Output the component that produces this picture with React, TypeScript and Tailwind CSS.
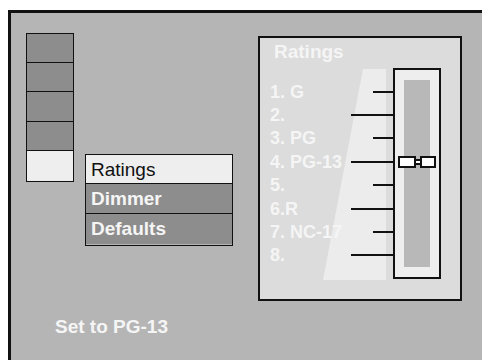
const ratings = [
  { label: '1. G', long: false },
  { label: '2.', long: true },
  { label: '3. PG', long: false },
  { label: '4. PG-13', long: true },
  { label: '5.', long: false },
  { label: '6.R', long: true },
  { label: '7. NC-17', long: false },
  { label: '8.', long: true },
];

const menu = ['Ratings', 'Dimmer', 'Defaults'];

export default function App() {
  return (
    <div className="w-[482px] h-[360px] bg-white pt-[10px] pl-[8px]" style={{ fontFamily: '"Liberation Sans", Arial, sans-serif' }}>
      <div className="w-[474px] h-[350px] border-t-[3px] border-l-[3px] border-[#111] bg-[#b5b5b5]">
        <div className="flex items-start pt-[20px]">
          {/* tab stack */}
          <div className="ml-[15px] w-[48px] border border-[#111] flex flex-col">
            <div className="h-[29px] bg-[#8d8d8d] border-b border-[#111]" />
            <div className="h-[29px] bg-[#8d8d8d] border-b border-[#111]" />
            <div className="h-[30px] bg-[#8d8d8d] border-b border-[#111]" />
            <div className="h-[29px] bg-[#8d8d8d] border-b border-[#111]" />
            <div className="h-[30px] bg-[#eeeeee]" />
          </div>

          {/* menu */}
          <div className="ml-[11px] mt-[121px] w-[148px] h-[92px] border border-[#111] flex flex-col">
            {menu.map((m, i) => (
              <div
                key={m}
                className={
                  i === 0
                    ? 'h-[29px] bg-[#eeeeee] text-[#111] text-[19px] leading-[29px] pl-[5px] border-b border-[#111]'
                    : i === 1
                    ? 'h-[30px] bg-[#8d8d8d] text-[#f5f5f5] font-bold text-[19px] leading-[30px] pl-[5px] border-b border-[#111]'
                    : 'h-[30px] bg-[#8d8d8d] text-[#f5f5f5] font-bold text-[19px] leading-[30px] pl-[5px]'
                }
              >
                {m}
              </div>
            ))}
          </div>

          {/* ratings panel */}
          <div className="ml-[25px] mt-[3px] w-[204px] h-[265px] border-2 border-[#111] bg-[#dcdcdc] flex flex-col">
            <div className="pl-[14px] pt-[2px] h-[30px] text-[19px] font-bold text-[#f5f5f5] leading-[24px]">Ratings</div>
            <div className="flex">
              <div className="relative w-[133px] h-[211px]">
                <svg className="absolute left-0 top-0" width="133" height="213" viewBox="0 0 133 213">
                  <polygon points="103,1 126,1 126,212 63,212" fill="#ececec" />
                </svg>
                <div className="relative flex flex-col pt-[12px]">
                  {ratings.map((r) => (
                    <div key={r.label} className="h-[23.4px] flex items-center">
                      <span className="pl-[10px] text-[18px] font-bold text-[#f5f5f5] leading-none flex-1 whitespace-nowrap">{r.label}</span>
                      <div className={r.long ? 'w-[42px] h-[2px] bg-[#111]' : 'w-[20px] h-[2px] bg-[#111]'} />
                    </div>
                  ))}
                </div>
              </div>
              {/* slider */}
              <div className="relative w-[48px] h-[211px] border-2 border-[#111] bg-[#eeeeee] pt-[10px] pl-[9px]">
                <div className="w-[26px] h-[187px] bg-[#b8b8b8]" />
                <div className="absolute left-[3px] top-[86px] flex items-center">
                  <div className="w-[18px] h-[12px] border-2 border-[#111] bg-white" />
                  <div className="w-[4px] h-[6px] border-y-2 border-[#111] bg-white" />
                  <div className="w-[16px] h-[12px] border-2 border-[#111] bg-white" />
                </div>
              </div>
            </div>
          </div>
        </div>

        <div className="ml-[44px] mt-[14px] text-[19px] font-bold text-[#f5f5f5] leading-[24px]">Set to PG-13</div>
      </div>
    </div>
  );
}
